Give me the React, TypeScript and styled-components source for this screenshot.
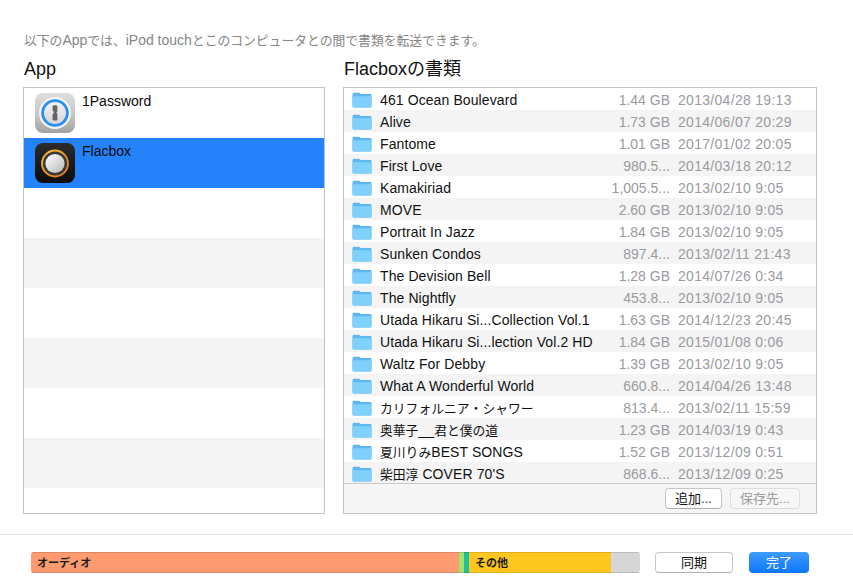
import React from 'react';
import styled, { createGlobalStyle } from 'styled-components';

const FONT = `"Liberation Sans", "Noto Sans CJK JP", sans-serif`;

const GlobalStyle = createGlobalStyle`
    html, body {
        margin: 0;
        background: #fff;
        font-family: ${FONT};
    }
`;

const Page = styled.div`
    width: 853px;
    height: 585px;
    overflow: hidden;
    background: #fff;
    display: flex;
    flex-direction: column;
`;

const Main = styled.div`
    height: 535px;
    padding: 32px 36px 0 23px;
    box-sizing: border-box;
    border-bottom: 1px solid #e3e3e3;
`;

const Intro = styled.div`
    height: 17px;
    font-size: 14px;
    line-height: 16px;
    color: #868686;
    margin-left: 1px;
    white-space: nowrap;
`;

const Columns = styled.div`
    display: flex;
    gap: 18px;
    margin-top: 6px;
`;

const Column = styled.div<{ $width: number }>`
    width: ${props => props.$width}px;
`;

const Heading = styled.div`
    font-size: 18px;
    line-height: 22px;
    height: 32px;
    padding-top: 3px;
    box-sizing: border-box;
    color: #111;
    margin-left: 1px;
`;

const Panel = styled.div`
    height: 427px;
    border: 1px solid #c4c4c4;
    box-sizing: border-box;
    display: flex;
    flex-direction: column;
    overflow: hidden;
`;

const AppRow = styled.div<{ $selected?: boolean; $alt?: boolean }>`
    height: 50px;
    flex: none;
    display: flex;
    padding: 5px 0 0 11px;
    box-sizing: border-box;
    gap: 7px;
    background: ${props => (props.$selected ? '#2482fb' : props.$alt ? '#f4f4f4' : '#fff')};
`;

const AppName = styled.div`
    font-size: 14px;
    line-height: 16px;
    color: #0a0a0a;
`;

const Files = styled.div`
    flex: 1;
    min-height: 0;
    overflow: hidden;
`;

const FileRow = styled.div<{ $alt?: boolean }>`
    height: 22px;
    box-sizing: border-box;
    padding: 1px 0 0 8px;
    display: flex;
    align-items: center;
    background: ${props => (props.$alt ? '#f4f4f4' : '#fff')};
`;

const FolderIcon = styled.svg`
    width: 20px;
    height: 16px;
    flex: none;
`;

const FileName = styled.div`
    width: 229px;
    flex: none;
    margin-left: 8px;
    font-size: 14px;
    letter-spacing: 0.1px;
    color: #111;
    white-space: nowrap;
`;

const FileSize = styled.div`
    width: 61px;
    flex: none;
    text-align: right;
    font-size: 14px;
    color: #9a9a9f;
    white-space: nowrap;
`;

const FileDate = styled.div`
    margin-left: 8px;
    font-size: 14px;
    letter-spacing: 0.3px;
    color: #9a9a9f;
    white-space: nowrap;
`;

const Cjk = styled.span`
    font-size: 12.8px;
    letter-spacing: 0;
`;

const PanelFooter = styled.div`
    height: 30px;
    flex: none;
    border-top: 1px solid #c8c8c8;
    background: #f5f5f5;
    display: flex;
    justify-content: flex-end;
    align-items: flex-start;
    gap: 8px;
    padding: 4px 16px 0 0;
    box-sizing: border-box;
`;

const SmallButton = styled.div<{ $disabled?: boolean }>`
    height: 19px;
    line-height: 19px;
    width: ${props => (props.$disabled ? 68 : 55)}px;
    text-align: center;
    font-size: 13px;
    border-radius: 4px;
    color: ${props => (props.$disabled ? '#9c9c9c' : '#111')};
    background: ${props => (props.$disabled ? '#f6f6f6' : '#fff')};
    border: 1px solid ${props => (props.$disabled ? '#dedede' : '#c6c6c6')};
    border-bottom-color: ${props => (props.$disabled ? '#dcdcdc' : '#adadad')};
`;

const Bottom = styled.div`
    flex: 1;
    display: flex;
    align-items: flex-start;
    padding: 17px 0 0 31px;
`;

const Storage = styled.div`
    width: 609px;
    height: 21px;
    display: flex;
    border-radius: 3px;
    overflow: hidden;
`;

const Segment = styled.div<{ $width: number; $color: string; $edge: string }>`
    width: ${props => props.$width}px;
    flex: none;
    box-sizing: border-box;
    background: ${props => props.$color};
    border-top: 1px solid ${props => props.$edge};
    border-bottom: 1px solid ${props => props.$edge};
`;

const SegmentLabel = styled.div`
    font-size: 11px;
    font-weight: bold;
    line-height: 21px;
    margin-left: 6px;
    color: #1a1a1a;
    white-space: nowrap;
`;

const SyncButton = styled.div`
    width: 76px;
    height: 19px;
    line-height: 19px;
    margin: 0 0 0 15px;
    text-align: center;
    font-size: 13px;
    color: #111;
    background: #fff;
    border: 1px solid #c8c8c8;
    border-bottom-color: #b0b0b0;
    border-radius: 4px;
`;

const DoneButton = styled.div`
    width: 60px;
    height: 21px;
    line-height: 21px;
    margin-left: 16px;
    text-align: center;
    font-size: 13px;
    color: #fff;
    background: linear-gradient(#3f9bfb, #0a76fb);
    border-radius: 4px;
`;

// Japanese glyphs sit a little smaller than the latin text beside them
const Mixed = ({ text }: { text: string }) => (
    <>
        {text.split(/([\u3000-\u9fff]+)/).map((part, i) =>
            i % 2 === 1 ? <Cjk key={i}>{part}</Cjk> : part,
        )}
    </>
);

const Folder = () => (
    <FolderIcon viewBox="0 0 20 16">
        <path d="M0.5 2.5C0.5 1.4 1.2 0.8 2.2 0.8H6.6C7.5 0.8 7.9 1.2 8.4 2H18.2C19 2 19.5 2.6 19.5 3.4V14C19.5 15 19 15.6 18 15.6H2C1 15.6 0.5 15 0.5 14Z" fill="#5cb8ee" />
        <path d="M0.5 4.2H19.5V14C19.5 15 19 15.6 18 15.6H2C1 15.6 0.5 15 0.5 14Z" fill="#7fd0fb" />
    </FolderIcon>
);

const OnePasswordIcon = () => (
    <svg width="40" height="40" viewBox="0 0 40 40">
        <defs>
            <linearGradient id="opBg" x1="0" y1="0" x2="0" y2="1">
                <stop offset="0" stopColor="#dedede" />
                <stop offset="0.55" stopColor="#c6c6c6" />
                <stop offset="1" stopColor="#a2a2a2" />
            </linearGradient>
            <linearGradient id="opFace" x1="0" y1="0" x2="0" y2="1">
                <stop offset="0" stopColor="#f2f2f2" />
                <stop offset="1" stopColor="#d6d6d6" />
            </linearGradient>
        </defs>
        <rect width="40" height="40" rx="8" fill="url(#opBg)" />
        <circle cx="20" cy="20" r="16" fill="#f4f4f4" />
        <circle cx="20" cy="20" r="12.4" fill="url(#opFace)" stroke="#2a8fee" strokeWidth="2.8" />
        <path d="M17.6 13.2C17.6 12 22.4 12 22.4 13.2V18.4L21.4 19.6L22.4 20.8V26.8C22.4 28 17.6 28 17.6 26.8V21.2L18.8 20V18.8L17.6 17.6Z" fill="#62666b" />
    </svg>
);

const FlacboxIcon = () => (
    <svg width="40" height="40" viewBox="0 0 40 40">
        <defs>
            <linearGradient id="fbBg" x1="0" y1="0" x2="0" y2="1">
                <stop offset="0" stopColor="#2c2c2c" />
                <stop offset="1" stopColor="#0c0c0c" />
            </linearGradient>
            <linearGradient id="fbRing" x1="0" y1="0" x2="1" y2="1">
                <stop offset="0" stopColor="#f7c23c" />
                <stop offset="1" stopColor="#e8711c" />
            </linearGradient>
            <linearGradient id="fbKnob" x1="0" y1="0" x2="1" y2="1">
                <stop offset="0" stopColor="#ffffff" />
                <stop offset="1" stopColor="#b8b8b8" />
            </linearGradient>
        </defs>
        <rect width="40" height="40" rx="8" fill="url(#fbBg)" />
        <circle cx="20" cy="20.5" r="13" fill="#3a3a3a" stroke="url(#fbRing)" strokeWidth="1.8" />
        <circle cx="20" cy="20.5" r="9.6" fill="url(#fbKnob)" />
    </svg>
);

const files = [
    { name: '461 Ocean Boulevard', size: '1.44 GB', date: '2013/04/28 19:13' },
    { name: 'Alive', size: '1.73 GB', date: '2014/06/07 20:29' },
    { name: 'Fantome', size: '1.01 GB', date: '2017/01/02 20:05' },
    { name: 'First Love', size: '980.5...', date: '2014/03/18 20:12' },
    { name: 'Kamakiriad', size: '1,005.5...', date: '2013/02/10 9:05' },
    { name: 'MOVE', size: '2.60 GB', date: '2013/02/10 9:05' },
    { name: 'Portrait In Jazz', size: '1.84 GB', date: '2013/02/10 9:05' },
    { name: 'Sunken Condos', size: '897.4...', date: '2013/02/11 21:43' },
    { name: 'The Devision Bell', size: '1.28 GB', date: '2014/07/26 0:34' },
    { name: 'The Nightfly', size: '453.8...', date: '2013/02/10 9:05' },
    { name: 'Utada Hikaru Si...Collection Vol.1', size: '1.63 GB', date: '2014/12/23 20:45' },
    { name: 'Utada Hikaru Si...lection Vol.2 HD', size: '1.84 GB', date: '2015/01/08 0:06' },
    { name: 'Waltz For Debby', size: '1.39 GB', date: '2013/02/10 9:05' },
    { name: 'What A Wonderful World', size: '660.8...', date: '2014/04/26 13:48' },
    { name: 'カリフォルニア・シャワー', size: '813.4...', date: '2013/02/11 15:59' },
    { name: '奥華子__君と僕の道', size: '1.23 GB', date: '2014/03/19 0:43' },
    { name: '夏川りみBEST SONGS', size: '1.52 GB', date: '2013/12/09 0:51' },
    { name: "柴田淳 COVER 70'S", size: '868.6...', date: '2013/12/09 0:25' },
];

const App = () => (
    <Page>
        <GlobalStyle />
        <Main>
            <Intro>
                <Mixed text="以下のAppでは、iPod touchとこのコンピュータとの間で書類を転送できます。" />
            </Intro>
            <Columns>
                <Column $width={302}>
                    <Heading>App</Heading>
                    <Panel>
                        <AppRow>
                            <OnePasswordIcon />
                            <AppName>1Password</AppName>
                        </AppRow>
                        <AppRow $selected>
                            <FlacboxIcon />
                            <AppName>Flacbox</AppName>
                        </AppRow>
                        {[0, 1, 2, 3, 4, 5].map(i => (
                            <AppRow key={i} $alt={i % 2 === 1} />
                        ))}
                    </Panel>
                </Column>
                <Column $width={474}>
                    <Heading>Flacboxの書類</Heading>
                    <Panel>
                        <Files>
                            {files.map((file, i) => (
                                <FileRow key={file.name} $alt={i % 2 === 1}>
                                    <Folder />
                                    <FileName>
                                        <Mixed text={file.name} />
                                    </FileName>
                                    <FileSize>{file.size}</FileSize>
                                    <FileDate>{file.date}</FileDate>
                                </FileRow>
                            ))}
                        </Files>
                        <PanelFooter>
                            <SmallButton>追加...</SmallButton>
                            <SmallButton $disabled>保存先...</SmallButton>
                        </PanelFooter>
                    </Panel>
                </Column>
            </Columns>
        </Main>
        <Bottom>
            <Storage>
                <Segment $width={428} $color="#fd9a70" $edge="#d98764">
                    <SegmentLabel>オーディオ</SegmentLabel>
                </Segment>
                <Segment $width={5} $color="#9fe46e" $edge="#8cc662" />
                <Segment $width={5} $color="#1fbf98" $edge="#1aa585" />
                <Segment $width={142} $color="#fec61f" $edge="#e0ae1c">
                    <SegmentLabel>その他</SegmentLabel>
                </Segment>
                <Segment $width={29} $color="#d6d6d6" $edge="#bcbcbc" />
            </Storage>
            <SyncButton>同期</SyncButton>
            <DoneButton>完了</DoneButton>
        </Bottom>
    </Page>
);

export default App;
